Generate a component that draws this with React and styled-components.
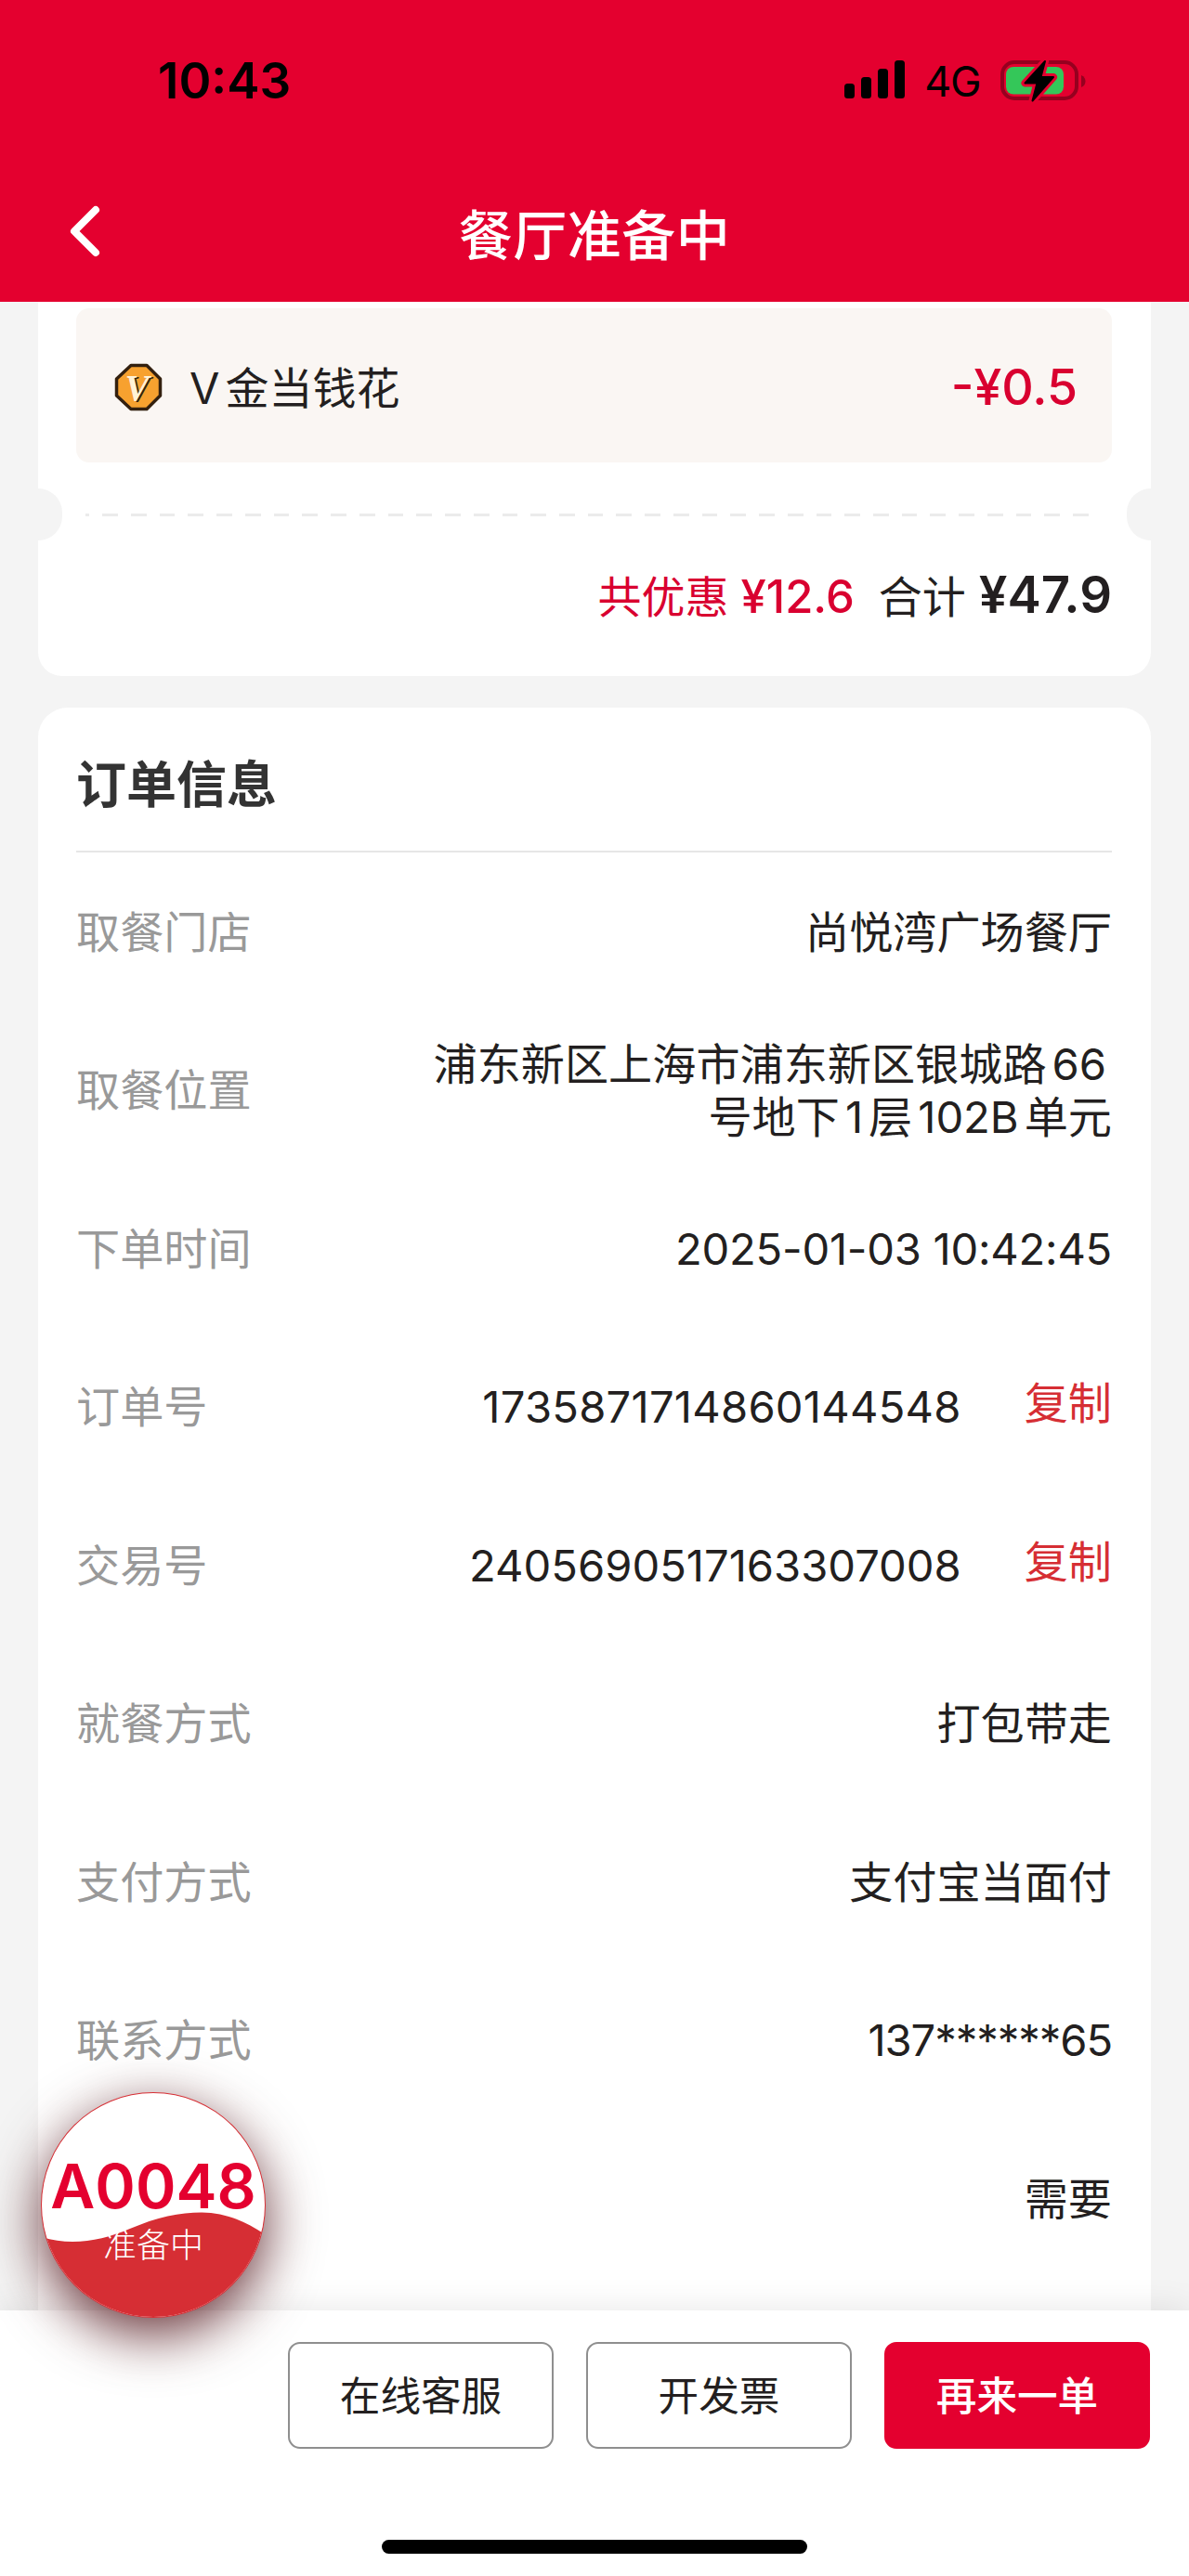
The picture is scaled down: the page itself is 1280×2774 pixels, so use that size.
import styled, { createGlobalStyle } from "styled-components";

const orderInfo = [
  { label: "取餐门店", value: "尚悦湾广场餐厅" },
  {
    label: "取餐位置",
    value: "浦东新区上海市浦东新区银城路66号地下1层102B单元",
  },
  { label: "下单时间", value: "2025-01-03 10:42:45", plain: true, spacing: -0.25 },
  {
    label: "订单号",
    value: "1735871714860144548",
    plain: true,
    spacing: 0.25,
    copy: true,
  },
  { label: "交易号", value: "2405690517163307008", plain: true, copy: true },
  { label: "就餐方式", value: "打包带走" },
  { label: "支付方式", value: "支付宝当面付" },
  { label: "联系方式", value: "137******65", plain: true, spacing: -1.1 },
  { label: "", value: "需要" },
];

const signalBars = [16, 23, 32, 41];

// adds a small gap between latin runs and the chinese characters around them
const spaced = (text) =>
  text
    .split(/([0-9A-Za-z]+)/)
    .filter(Boolean)
    .map((part, index) =>
      /[0-9A-Za-z]/.test(part) ? <Latin key={index}>{part}</Latin> : part
    );

const BatteryIcon = () => (
  <svg width="94" height="48" viewBox="0 0 94 48">
    <rect
      x="4"
      y="4"
      width="80"
      height="39"
      rx="13"
      fill="none"
      stroke="#96001f"
      strokeWidth="4"
    />
    <path d="M89 18c3.500 1.500 4.500 4 4.500 6.500s-1 5-4.500 6.500z" fill="#96001f" />
    <rect x="8" y="9" width="62" height="29.500" rx="8" fill="#34c759" />
    <path
      d="M50 3L28.500 26.500h13L36.500 45.500L59 20H45.500z"
      fill="#e4002f"
      stroke="#e4002f"
      strokeWidth="8"
      strokeLinejoin="round"
    />
    <path
      d="M50 3L28.500 26.500h13L36.500 45.500L59 20H45.500z"
      fill="#000"
      stroke="#000"
      strokeWidth="2"
      strokeLinejoin="round"
    />
  </svg>
);

const BackIcon = () => (
  <svg width="38" height="60" viewBox="0 0 38 60">
    <path
      d="M32 7L9 30L32 53"
      fill="none"
      stroke="#fff"
      strokeWidth="8"
      strokeLinecap="round"
      strokeLinejoin="round"
    />
  </svg>
);

const CoinIcon = () => (
  <svg width="52" height="52" viewBox="0 0 52 52">
    <path
      d="M18 2.500h17L49.500 17v18L35 49.500H18L2.500 35V17z"
      fill="#f7a12f"
      stroke="#33200f"
      strokeWidth="3.500"
      strokeLinejoin="round"
    />
    <CoinLetter x="13.500" y="41" fill="#33200f">
      V
    </CoinLetter>
    <CoinLetter x="11.500" y="40" fill="#fff3d6">
      V
    </CoinLetter>
  </svg>
);

const TicketBadge = () => (
  <Badge>
    <BadgeWave viewBox="0 0 242 242">
      <path
        d="M-2 155C30 166 65 160 95 147S150 129 173.500 129C198 129 220 138 244 154V244H-2z"
        fill="#d62e34"
      />
    </BadgeWave>
    <BadgeNumber>A0048</BadgeNumber>
    <BadgeStatus>准备中</BadgeStatus>
  </Badge>
);

const App = () => {
  return (
    <>
      <GlobalStyle />
      <Page>
        <Header>
          <StatusBar>
            <Clock>10:43</Clock>
            <StatusIcons>
              <Signal>
                {signalBars.map((h) => (
                  <Bar key={h} $height={h} />
                ))}
              </Signal>
              <Network>4G</Network>
              <BatteryIcon />
            </StatusIcons>
          </StatusBar>
          <NavBar>
            <BackIcon />
            <NavTitle>餐厅准备中</NavTitle>
          </NavBar>
        </Header>

        <Main>
          <SummaryCard>
            <CoinRow>
              <CoinIcon />
              <CoinLabel>{spaced("V金当钱花")}</CoinLabel>
              <CoinAmount>-¥0.5</CoinAmount>
            </CoinRow>
            <TearLine>
              <Notch />
              <Dashes />
              <Notch $right />
            </TearLine>
            <Totals>
              <Saved>共优惠</Saved>
              <SavedAmount>¥12.6</SavedAmount>
              <TotalLabel>合计</TotalLabel>
              <TotalAmount>¥47.9</TotalAmount>
            </Totals>
          </SummaryCard>

          <InfoCard>
            <InfoTitle>订单信息</InfoTitle>
            {orderInfo.map((row, index) => (
              <InfoRow key={index}>
                <InfoLabel>{row.label}</InfoLabel>
                <InfoValue $spacing={row.spacing}>
                  {row.plain ? row.value : spaced(row.value)}
                </InfoValue>
                {row.copy && <CopyButton>复制</CopyButton>}
              </InfoRow>
            ))}
          </InfoCard>
        </Main>

        <Footer>
          <TicketBadge />
          <Actions>
            <ActionButton>在线客服</ActionButton>
            <ActionButton>开发票</ActionButton>
            <ActionButton $primary>再来一单</ActionButton>
          </Actions>
          <HomeIndicator />
        </Footer>
      </Page>
    </>
  );
};

export default App;

const GlobalStyle = createGlobalStyle`
  * {
    box-sizing: border-box;
  }
  body {
    margin: 0;
    font-family: Inter, "Noto Sans CJK SC", sans-serif;
    color: #231f20;
  }
  svg {
    display: block;
    flex-shrink: 0;
  }
`;

const Page = styled.div`
  display: flex;
  flex-direction: column;
  width: 1280px;
  height: 2774px;
  background: #f4f4f4;
  overflow: hidden;
`;

const Header = styled.header`
  flex-shrink: 0;
  height: 325px;
  background: #e4002f;
`;

const StatusBar = styled.div`
  display: flex;
  align-items: center;
  justify-content: space-between;
  height: 173px;
  padding: 0 111px 0 170px;
`;

const Clock = styled.span`
  font-size: 53px;
  line-height: 64px;
  font-weight: 600;
  color: #000;
`;

const StatusIcons = styled.div`
  display: flex;
  align-items: center;
`;

const Signal = styled.div`
  display: flex;
  align-items: flex-end;
  gap: 7px;
  margin: 0 21px 2px 0;
`;

const Bar = styled.span`
  width: 11px;
  height: ${(p) => p.$height}px;
  border-radius: 3.5px;
  background: #000;
`;

const Network = styled.span`
  margin: 3px 20px 0 0;
  font-size: 45px;
  line-height: 50px;
  letter-spacing: -1.5px;
  color: #000;
`;

const NavBar = styled.div`
  display: grid;
  grid-template-columns: 38px 1fr 38px;
  align-items: center;
  height: 152px;
  padding: 0 71px;
`;

const NavTitle = styled.h1`
  margin: 9px 0 0;
  font-size: 58px;
  line-height: 70px;
  font-weight: 500;
  letter-spacing: 0.5px;
  text-align: center;
  color: #fff;
`;

const Main = styled.main`
  flex: 1;
  min-height: 0;
  padding: 0 41px;
  overflow: hidden;
`;

const SummaryCard = styled.section`
  height: 403px;
  padding-top: 7px;
  border-radius: 0 0 26px 26px;
  background: #fff;
`;

const CoinRow = styled.div`
  display: flex;
  align-items: center;
  height: 166px;
  margin: 0 42px 0 41px;
  padding: 4px 37px 0 41px;
  border-radius: 14px;
  background: #faf6f3;
`;

const CoinLetter = styled.text`
  font-family: "Liberation Serif", serif;
  font-size: 39px;
  font-weight: 700;
  font-style: italic;
`;

const Latin = styled.span`
  margin: 0 6px;
`;

const CoinLabel = styled.span`
  flex: 1;
  margin-left: 23px;
  font-size: 47px;
  line-height: 57px;
`;

const CoinAmount = styled.span`
  font-size: 53.5px;
  line-height: 64px;
  font-weight: 500;
  color: #d90030;
`;

const TearLine = styled.div`
  display: flex;
  align-items: center;
  height: 56px;
  margin-top: 28px;
`;

const Notch = styled.span`
  width: 26px;
  height: 56px;
  border-radius: ${(p) => (p.$right ? "28px 0 0 28px" : "0 28px 28px 0")};
  background: #f4f4f4;
`;

const Dashes = styled.div`
  flex: 1;
  height: 3px;
  margin: 0 27px 0 25px;
  background: repeating-linear-gradient(
    90deg,
    #ebebeb 0 4.3px,
    transparent 4.3px 18.3px,
    #ebebeb 18.3px 30.73px
  );
`;

const Totals = styled.div`
  display: flex;
  align-items: center;
  justify-content: flex-end;
  height: 121px;
  padding-right: 42px;
  font-size: 47px;
  line-height: 57px;
`;

const Saved = styled.span`
  color: #d90030;
`;

const SavedAmount = styled.span`
  margin-left: 13px;
  font-size: 49px;
  font-weight: 500;
  color: #d90030;
`;

const TotalLabel = styled.span`
  margin-left: 26px;
`;

const TotalAmount = styled.span`
  margin: -4px 0 0 14px;
  font-size: 54.5px;
  font-weight: 600;
`;

const InfoCard = styled.section`
  height: 1800px;
  margin-top: 33.5px;
  padding: 0 42px 0 41px;
  border-radius: 32px 32px 0 0;
  background: #fff;
`;

const InfoTitle = styled.h2`
  display: flex;
  align-items: center;
  height: 156.5px;
  margin: 0;
  padding-top: 15px;
  border-bottom: 2.5px solid #e6e6e6;
  font-size: 54px;
  line-height: 64px;
  font-weight: 600;
  color: #333;
`;

const InfoRow = styled.div`
  display: flex;
  align-items: center;
  justify-content: space-between;
  height: 170.5px;
  font-size: 47.15px;
  line-height: 57px;
`;

const InfoLabel = styled.span`
  color: #999;
`;

const InfoValue = styled.span`
  max-width: 752px;
  margin-left: auto;
  text-align: right;
  letter-spacing: ${(p) => p.$spacing || 0}px;
`;

const CopyButton = styled.button`
  margin: 0 0 8px 68px;
  padding: 0;
  border: 0;
  background: none;
  font: inherit;
  color: #d62e34;
`;

const Footer = styled.footer`
  position: relative;
  display: flex;
  flex-direction: column;
  align-items: center;
  justify-content: space-between;
  flex-shrink: 0;
  height: 286px;
  padding: 34px 42px 24px;
  background: #fff;
  box-shadow: 0 0 36px rgba(0, 0, 0, 0.1);
`;

const Actions = styled.div`
  display: flex;
  align-self: flex-end;
  gap: 35px;
`;

const ActionButton = styled.button`
  width: 286px;
  height: 115px;
  padding: 2px 0 0;
  border: 2px solid ${(p) => (p.$primary ? "#e4002f" : "#8f8f8f")};
  border-radius: 13px;
  background: ${(p) => (p.$primary ? "#e4002f" : "#fff")};
  font-family: inherit;
  font-size: 43.6px;
  line-height: 52px;
  font-weight: ${(p) => (p.$primary ? 500 : 400)};
  color: ${(p) => (p.$primary ? "#fff" : "#231f20")};
`;

const HomeIndicator = styled.div`
  width: 458px;
  height: 15px;
  border-radius: 8px;
  background: #000;
`;

// floats over the order card and the footer
const Badge = styled.div`
  position: absolute;
  left: 44px;
  top: -235px;
  display: flex;
  flex-direction: column;
  align-items: center;
  width: 242px;
  height: 243px;
  padding-top: 65px;
  border: 1px solid #d62e34;
  border-radius: 50%;
  background: #fff;
  box-shadow: 0 18px 58px rgba(66, 0, 8, 0.8);
`;

const BadgeWave = styled.svg`
  position: absolute;
  inset: 0;
  width: 100%;
  height: 100%;
  border-radius: 50%;
`;

const BadgeNumber = styled.span`
  position: relative;
  font-size: 66px;
  line-height: 70px;
  font-weight: 600;
  white-space: nowrap;
  color: #e4002f;
`;

const BadgeStatus = styled.span`
  position: relative;
  margin-top: 7px;
  font-size: 36px;
  line-height: 44px;
  font-weight: 300;
  color: #fff;
`;
